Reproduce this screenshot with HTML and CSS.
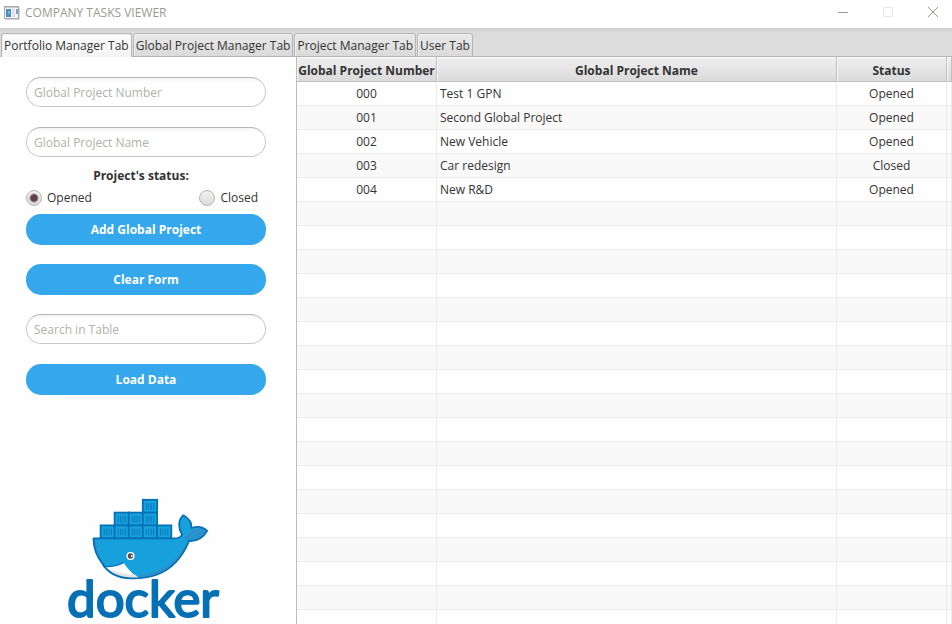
FILE: index.html
```html
<!DOCTYPE html>
<html lang="en">
<head>
<meta charset="utf-8">
<meta name="viewport" content="width=device-width, initial-scale=1">
<title>COMPANY TASKS VIEWER</title>
<link rel="stylesheet" href="styles.css">
</head>
<body>
<header class="titlebar">
  <svg class="app-icon" width="16" height="14" viewBox="0 0 16 14" aria-hidden="true">
    <rect x="0.5" y="0.5" width="14" height="12" fill="#f4f4f6" stroke="#a9a9b3"/>
    <rect x="1" y="1" width="13" height="1" fill="#c9c9d2"/>
    <rect x="2" y="3" width="5" height="8" fill="#4a8fc4"/>
    <rect x="4" y="5" width="2" height="3" fill="#78b0dc"/>
    <rect x="8" y="3" width="3" height="8" fill="#dfe2e8"/>
    <rect x="12" y="3" width="2" height="5" fill="#7f9fc0"/>
    <path d="M15.5 1v12.5H1" fill="none" stroke="#d8d8dc"/>
  </svg>
  <h1 class="app-title">COMPANY TASKS VIEWER</h1>
  <div class="window-controls">
    <button type="button" aria-label="Minimize"><svg width="12" height="12" viewBox="0 0 12 12"><path d="M1 5.5h10" stroke="#a09890" fill="none"/></svg></button>
    <button type="button" aria-label="Maximize" disabled><svg width="12" height="12" viewBox="0 0 12 12"><rect x="1.5" y="0.5" width="9" height="9" stroke="#e8e8e8" fill="none"/></svg></button>
    <button type="button" aria-label="Close"><svg width="12" height="12" viewBox="0 0 12 12"><path d="M1 0l10 10M11 0L1 10" stroke="#9a948e" fill="none"/></svg></button>
  </div>
</header>
<nav class="tabs" role="tablist">
  <button type="button" class="tab tab-active" role="tab" aria-selected="true">Portfolio Manager Tab</button>
  <button type="button" class="tab" role="tab">Global Project Manager Tab</button>
  <button type="button" class="tab" role="tab">Project Manager Tab</button>
  <button type="button" class="tab" role="tab">User Tab</button>
</nav>
<main class="content">
  <section class="panel">
    <form class="form">
      <input class="field" type="text" placeholder="Global Project Number" aria-label="Global Project Number">
      <input class="field" type="text" placeholder="Global Project Name" aria-label="Global Project Name">
      <fieldset class="status">
        <legend class="status-title">Project's status:</legend>
        <div class="choices">
          <label class="choice"><input type="radio" name="status" checked>Opened</label>
          <label class="choice"><input type="radio" name="status">Closed</label>
        </div>
      </fieldset>
      <button type="button" class="action">Add Global Project</button>
      <button type="button" class="action">Clear Form</button>
      <input class="field" type="text" placeholder="Search in Table" aria-label="Search in Table">
      <button type="button" class="action">Load Data</button>
    </form>
    <svg class="logo" width="170" height="134" viewBox="60 490 170 134" role="img" aria-label="docker">
      <defs>
        <clipPath id="hull"><path d="M93.5 538.4H174C178 538.4 181 537 182 534.5C178 528 178 520 183.4 515.3C189 518.5 192 523 191.3 528C197 526 203 527 207.2 530.8C203 538 197 541.5 189 541C183 556 173 569 156 575C147 578 139 578.6 131 578.4C116 578 107 572 102 563C96 555 93.5 547 93.5 538.4Z"/></clipPath>
        <g id="box">
          <rect width="14.3" height="13" fill="#17a1dc" stroke="#0670b5" stroke-width="1.8"/>
          <path d="M3.6 3.2v6.8M6 3.2v6.8M8.4 3.2v6.8M10.8 3.2v6.8" stroke="#0878b9" stroke-width="1" fill="none"/>
        </g>
      </defs>
      <use href="#box" x="142.8" y="499.8"/>
      <use href="#box" x="114.6" y="512.6"/>
      <use href="#box" x="128.7" y="512.6"/>
      <use href="#box" x="142.8" y="512.6"/>
      <use href="#box" x="100.6" y="525.4"/>
      <use href="#box" x="114.6" y="525.4"/>
      <use href="#box" x="128.7" y="525.4"/>
      <use href="#box" x="142.8" y="525.4"/>
      <use href="#box" x="157" y="525.4"/>
      <g clip-path="url(#hull)">
        <rect x="90" y="510" width="120" height="72" fill="#17a1dc"/>
        <path d="M93 538h3c0 10 3 20 10 28h-5l-8-10z" fill="#2a92cd"/>
        <path d="M208 528l-16 1c-3 4-5 7-9 8l4 4c-8 17-21 30-45 33l-10 6h20l35-15 22-26z" fill="#2a92cd"/>
        <path d="M104 566.5C112 567 119 565 123.5 562.6C127 568 132 574 139 579H120C112 577 107 572 104 566.5Z" fill="#fff"/>
        <path d="M106 567C116 573 126 574 135 574.5L140 579H120C112 576 108 572 106 567Z" fill="#e5e5e5"/>
      </g>
      <path d="M104 566.5C112 567 119 565 123.5 562.6" fill="none" stroke="#0670b5" stroke-width="1.3" stroke-linecap="round"/>
      <path d="M93.5 538.4H174C178 538.4 181 537 182 534.5C178 528 178 520 183.4 515.3C189 518.5 192 523 191.3 528C197 526 203 527 207.2 530.8C203 538 197 541.5 189 541C183 556 173 569 156 575C147 578 139 578.6 131 578.4C116 578 107 572 102 563C96 555 93.5 547 93.5 538.4Z" fill="none" stroke="#0670b5" stroke-width="1.8" stroke-linejoin="round"/>
      <circle cx="130.5" cy="556" r="4.1" fill="#fff"/>
      <circle cx="130.5" cy="556" r="2.7" fill="#594a55"/>
      <circle cx="131.8" cy="556" r="0.9" fill="#fff"/>
      <text class="wordmark" x="143" y="617" text-anchor="middle">docker</text>
    </svg>
  </section>
  <section class="table-pane">
    <table class="projects">
      <colgroup><col class="col-number"><col class="col-name"><col class="col-status"><col></colgroup>
      <thead>
        <tr><th scope="col">Global Project Number</th><th scope="col">Global Project Name</th><th scope="col">Status</th><th></th></tr>
      </thead>
      <tbody>
        <tr><td>000</td><td>Test 1 GPN</td><td>Opened</td><td></td></tr>
        <tr><td>001</td><td>Second Global Project</td><td>Opened</td><td></td></tr>
        <tr><td>002</td><td>New Vehicle</td><td>Opened</td><td></td></tr>
        <tr><td>003</td><td>Car redesign</td><td>Closed</td><td></td></tr>
        <tr><td>004</td><td>New R&amp;D</td><td>Opened</td><td></td></tr>
        <tr><td></td><td></td><td></td><td></td></tr>
        <tr><td></td><td></td><td></td><td></td></tr>
        <tr><td></td><td></td><td></td><td></td></tr>
        <tr><td></td><td></td><td></td><td></td></tr>
        <tr><td></td><td></td><td></td><td></td></tr>
        <tr><td></td><td></td><td></td><td></td></tr>
        <tr><td></td><td></td><td></td><td></td></tr>
        <tr><td></td><td></td><td></td><td></td></tr>
        <tr><td></td><td></td><td></td><td></td></tr>
        <tr><td></td><td></td><td></td><td></td></tr>
        <tr><td></td><td></td><td></td><td></td></tr>
        <tr><td></td><td></td><td></td><td></td></tr>
        <tr><td></td><td></td><td></td><td></td></tr>
        <tr><td></td><td></td><td></td><td></td></tr>
        <tr><td></td><td></td><td></td><td></td></tr>
        <tr><td></td><td></td><td></td><td></td></tr>
        <tr><td></td><td></td><td></td><td></td></tr>
        <tr><td></td><td></td><td></td><td></td></tr>
      </tbody>
    </table>
  </section>
</main>
</body>
</html>
```
FILE: styles.css
```css
* { box-sizing: border-box; }

body {
  margin: 0;
  height: 100vh;
  display: flex;
  flex-direction: column;
  overflow: hidden;
  background: #fefefe;
  color: #333;
  font: 12px/16px "Open Sans", "Noto Sans", sans-serif;
}

button, input { font: inherit; color: inherit; }

.titlebar {
  display: flex;
  align-items: center;
  gap: 5px;
  height: 28px;
  padding: 0 13px 3px 4px;
  background: #fff;
}

.app-title {
  margin: 0;
  flex: 1;
  font-size: 12px;
  font-weight: 400;
  color: #979b92;
}

.window-controls { display: flex; gap: 33px; }

.window-controls button {
  display: flex;
  padding: 0;
  border: 0;
  background: none;
}

.tabs {
  display: flex;
  align-items: flex-end;
  gap: 1px;
  height: 29px;
  padding: 0 1px;
  background: linear-gradient(#cfcfcf, #dcdcdc 5px);
  box-shadow: inset 0 -1px #b5b5b5;
}

.tab {
  height: 24px;
  padding: 2px 2px 0;
  border: 1px solid #b5b5b5;
  border-radius: 3px 3px 0 0;
  background: linear-gradient(#e9e9e9, #dadada);
  box-shadow: inset 1px 1px #f0f0f0;
  white-space: nowrap;
}

.tab-active {
  border-bottom-color: #f4f4f4;
  background: linear-gradient(#fcfcfc, #f4f4f4);
}

.content {
  flex: 1;
  display: flex;
  min-height: 0;
}

.panel {
  flex: none;
  width: 296px;
  display: flex;
  flex-direction: column;
  padding: 20px 30px 0 26px;
}

.form { display: flex; flex-direction: column; }

.field {
  width: 100%;
  height: 30px;
  margin-bottom: 20px;
  padding: 0 7px;
  border: 1px solid #c8c8c8;
  border-top-color: #b6b6b6;
  border-radius: 15px;
  background: linear-gradient(#f3f3f3, #fff 4px);
  outline: 0;
}

.field::placeholder { color: #aeb2a9; opacity: 1; }

.status {
  margin: -10px 0 8px;
  padding: 0;
  border: 0;
}

.status-title {
  width: 100%;
  padding: 0 10px 0 0;
  line-height: 18px;
  font-weight: 700;
  text-align: center;
}

.choices {
  display: flex;
  justify-content: space-between;
  padding: 4px 8px 0 0;
}

.choice {
  display: flex;
  align-items: center;
  gap: 5px;
  height: 17px;
}

.choice input {
  appearance: none;
  width: 16px;
  height: 16px;
  margin: 0;
  border: 1px solid #b5b5b5;
  border-radius: 50%;
  background: linear-gradient(#f0f0f0, #dcdcdc);
}

.choice input:checked {
  background: radial-gradient(circle, #5f404b 3px, transparent 5px), linear-gradient(#f0f0f0, #dcdcdc);
}

.action {
  height: 31px;
  margin-bottom: 19px;
  border: 0;
  border-radius: 15px;
  background: #35a7ec;
  color: #fff;
  font-weight: 700;
}

.logo {
  margin: auto 0 0 34px;
}

.wordmark {
  font: 400 51px Lato, sans-serif;
  fill: #0670b5;
  stroke: #0670b5;
  stroke-width: 2px;
  stroke-linejoin: round;
}

.table-pane {
  flex: 1;
  min-width: 0;
  overflow: hidden;
  border-left: 1px solid #bcbcbc;
}

.projects {
  width: 100%;
  table-layout: fixed;
  border-collapse: separate;
  border-spacing: 0;
}

.col-number { width: 140px; }
.col-name { width: 400px; }
.col-status { width: 110px; }

th {
  height: 25px;
  padding: 4px 0 0;
  border-right: 1px solid #c0c0c0;
  border-bottom: 1px solid #c0c0c0;
  background: linear-gradient(#f0f0f0, #dadada);
  box-shadow: inset 1px 1px #f8f8f8;
  white-space: nowrap;
}

td {
  height: 24px;
  padding: 0 3px;
  border-right: 1px solid #ebebeb;
  border-bottom: 1px solid #ebebeb;
  text-align: center;
}

td:nth-child(2) { text-align: left; }

tbody tr:nth-child(even) { background: #f9f9f9; }
```
